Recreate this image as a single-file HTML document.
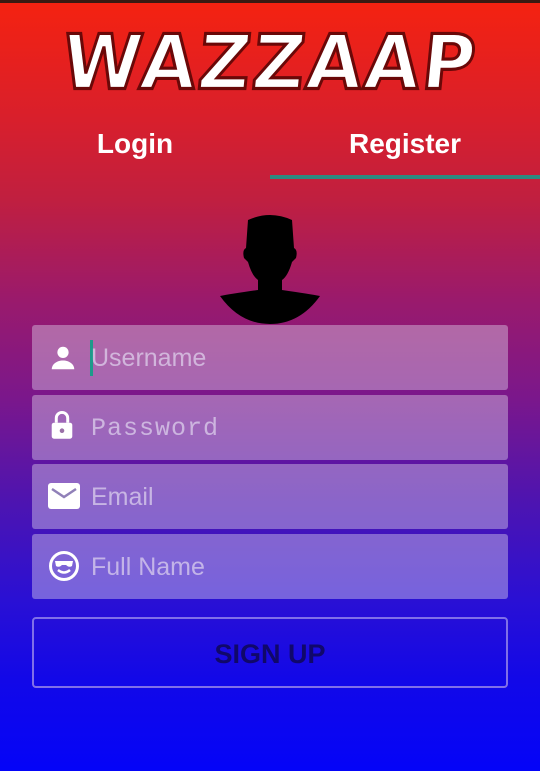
<!DOCTYPE html>
<html><head><style>
html,body{margin:0;padding:0}
body{width:540px;height:771px;overflow:hidden;position:relative;font-family:"Liberation Sans",sans-serif;
background:linear-gradient(to bottom,#f52210 0px,#d81f2c 120px,#c01f40 200px,#9a1a6c 300px,#7a178c 400px,#4e14b0 500px,#2a10d4 600px,#1208e8 680px,#0404f8 771px);}
.top{position:absolute;left:0;top:0;width:540px;height:3px;background:#3a1a12}
.logo{position:absolute;left:0;top:20px;width:540px;text-align:center;font-size:72px;font-weight:bold;color:#fff;letter-spacing:2px;
-webkit-text-stroke:3px #6a0808;font-family:"DejaVu Sans",sans-serif;transform:scaleY(1.05) skewX(-6deg)}
.tab{position:absolute;top:128px;font-size:28px;font-weight:bold;color:#fff;width:270px;text-align:center}
.ul{position:absolute;left:270px;top:175px;width:270px;height:4px;background:#2f8a80}
.f{position:absolute;left:32px;width:476px;height:65px;border-radius:3px;background:rgba(225,215,235,0.42)}
.f span{position:absolute;left:59px;top:19px;font-size:25px;color:rgba(225,215,240,0.7)}
.f svg{position:absolute;left:16px;top:17px}
.btn{position:absolute;left:32px;top:617px;width:472px;height:67px;border:2px solid #8070e8;border-radius:4px;text-align:center;line-height:70px;font-size:27px;font-weight:bold;color:#10086a}
</style></head><body>
<div class="top"></div>
<div class="logo">WAZZAAP</div>
<div class="tab" style="left:0">Login</div>
<div class="tab" style="left:270px">Register</div>
<div class="ul"></div>
<svg style="position:absolute;left:220px;top:210px" width="100" height="114" viewBox="0 0 100 114">
<path d="M28 10 Q50 0 72 10 L74 38 Q78 40 76 48 L72 52 Q68 66 62 70 L62 80 Q90 84 100 86 Q80 114 50 114 Q20 114 0 86 Q10 84 38 80 L38 70 Q32 66 28 52 L24 48 Q22 40 26 38 Z" fill="#000"/>
</svg>
<div class="f" style="top:325px"><svg width="30" height="30" viewBox="0 0 24 24" style="top:18px"><circle cx="12" cy="7.5" r="4.5" fill="#fff"/><path d="M3 21c0-4 4-7 9-7s9 3 9 7z" fill="#fff"/></svg>
<div style="position:absolute;left:58px;top:15px;width:3px;height:36px;background:#1e9a8a"></div><span>Username</span></div>
<div class="f" style="top:395px"><svg width="28" height="32" viewBox="0 0 24 28" style="top:14px"><path d="M7 12V8a5 5 0 0110 0v4" stroke="#fff" stroke-width="2.6" fill="none"/><rect x="3" y="12" width="18" height="14" rx="2" fill="#fff"/><circle cx="12" cy="19" r="2" fill="#9a70a8"/></svg>
<span style="font-family:'Liberation Mono',monospace;letter-spacing:1px">Password</span></div>
<div class="f" style="top:464px"><svg width="32" height="26" viewBox="0 0 32 26" style="left:16px;top:19px"><rect width="32" height="26" rx="3" fill="#fff"/><path d="M4 6l12 8 12-8" stroke="#9080b8" stroke-width="2.5" fill="none"/></svg><span>Email</span></div>
<div class="f" style="top:534px"><svg width="32" height="32" viewBox="0 0 32 32" style="left:16px;top:16px"><circle cx="16" cy="16" r="13.5" stroke="#fff" stroke-width="3" fill="none"/><path d="M7 11h18l-1 5q-3 2-6-1h-4q-3 3-6 1z" fill="#fff"/><path d="M10 20q6 5 12 0" stroke="#fff" stroke-width="2.5" fill="none"/></svg><span>Full Name</span></div>
<div class="btn">SIGN UP</div>
</body></html>
